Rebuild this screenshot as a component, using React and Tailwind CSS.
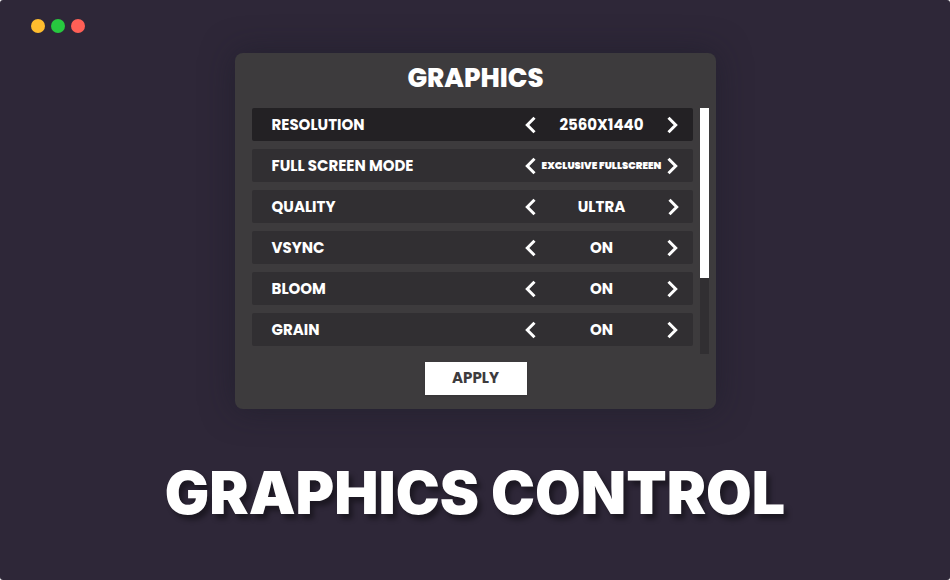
import React, { useState } from "react";

const settings = [
  { label: "Resolution", options: ["2560x1440", "1920x1080", "1280x720"] },
  {
    label: "Full Screen Mode",
    options: ["Exclusive Fullscreen", "Windowed"],
    small: true,
  },
  { label: "Quality", options: ["Ultra", "High", "Medium", "Low"] },
  { label: "Vsync", options: ["On", "Off"] },
  { label: "Bloom", options: ["On", "Off"] },
  { label: "Grain", options: ["On", "Off"] },
];

function Arrow({ direction, label, onClick }) {
  return (
    <button type="button" aria-label={label} onClick={onClick}>
      <svg
        className="w-3 h-[18px]"
        viewBox="0 0 12 18"
        fill="none"
        stroke="currentColor"
        strokeWidth="3"
      >
        <path
          d={
            direction === "left"
              ? "M10.5 1.8 L3.3 9 L10.5 16.2"
              : "M1.5 1.8 L8.7 9 L1.5 16.2"
          }
        />
      </svg>
    </button>
  );
}

function SettingRow({ setting, active, onSelect }) {
  const [index, setIndex] = useState(0);
  const count = setting.options.length;

  function step(amount) {
    setIndex((index + amount + count) % count);
    onSelect();
  }

  return (
    <li
      className={`flex items-center justify-between h-[33px] pl-5 pr-[13px] rounded-xs ${
        active ? "bg-[#232124]" : "bg-[#312f32]"
      }`}
    >
      <span className="text-[15px] leading-6">{setting.label}</span>
      <div className="flex items-center justify-between w-[156px]">
        <Arrow
          direction="left"
          label={`Previous ${setting.label}`}
          onClick={() => step(-1)}
        />
        <span
          className={`whitespace-nowrap leading-6 ${
            setting.small ? "text-[10px] font-black" : "text-[15px]"
          }`}
        >
          {setting.options[index]}
        </span>
        <Arrow
          direction="right"
          label={`Next ${setting.label}`}
          onClick={() => step(1)}
        />
      </div>
    </li>
  );
}

export default function App() {
  const [selected, setSelected] = useState(0);

  return (
    <div className="bg-white">
      <main className="relative min-h-screen rounded-[3px] bg-[#2e2738] pt-[53px] pb-10 text-white uppercase font-['Inter',sans-serif]">
        <div className="absolute top-[19px] left-[31px] flex gap-[6px]">
          <span className="size-[14px] rounded-full bg-[#ffbd2e]"></span>
          <span className="size-[14px] rounded-full bg-[#27c93f]"></span>
          <span className="size-[14px] rounded-full bg-[#ff5f56]"></span>
        </div>

        <section className="w-full max-w-[481px] mx-auto pl-[17px] pr-4 pt-2 pb-[14px] rounded-lg bg-[#3d3b3d] shadow-[0_0_32px_rgba(24,26,38,0.5)] font-['Poppins','Inter',sans-serif] font-bold">
          <h2 className="text-center text-[26px] leading-[34px] mb-[13px] font-extrabold">
            Graphics
          </h2>
          <div className="flex gap-[7px] -mr-[9px]">
            <ul className="flex-1 flex flex-col gap-2">
              {settings.map((setting, i) => (
                <SettingRow
                  key={setting.label}
                  setting={setting}
                  active={i === selected}
                  onSelect={() => setSelected(i)}
                />
              ))}
            </ul>
            <div className="w-[9px] -mb-2 bg-[#312f32]">
              <div className="h-[69%] bg-white"></div>
            </div>
          </div>
          <div className="flex justify-center mt-4">
            <button
              type="button"
              className="w-[102px] h-[33px] bg-white text-[#3d3b3d] text-[15px] uppercase shadow-sm"
            >
              Apply
            </button>
          </div>
        </section>

        <h1 className="mt-12 text-center text-[59px] leading-[72px] font-black text-shadow-[4px_5px_5px_rgba(0,0,0,0.4)]">
          Graphics Control
        </h1>
      </main>
    </div>
  );
}
